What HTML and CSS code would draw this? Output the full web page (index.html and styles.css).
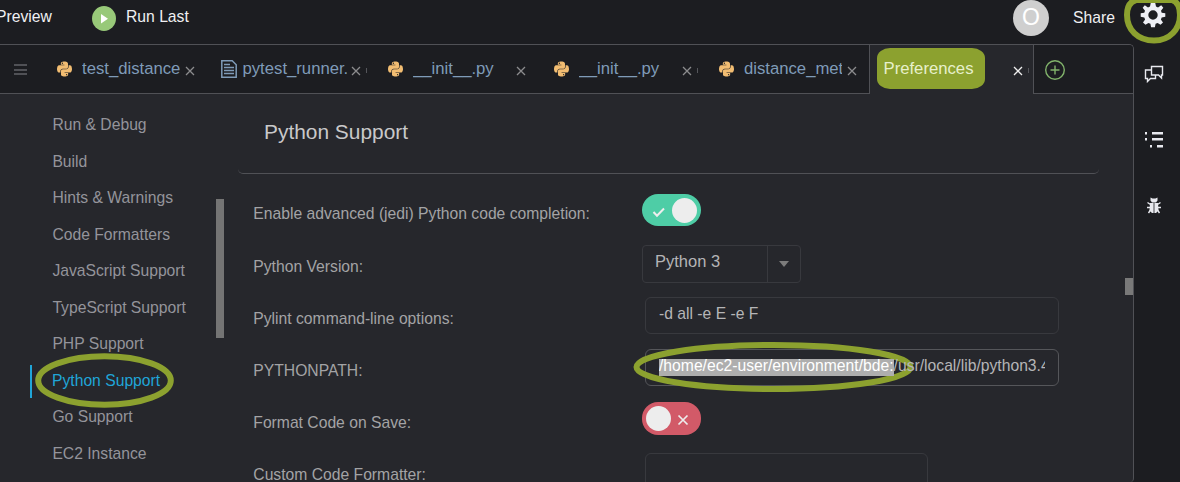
FILE: index.html
```html
<!DOCTYPE html>
<html lang="en">
<head>
<meta charset="utf-8">
<title>Preferences</title>
<link rel="stylesheet" href="styles.css">
</head>
<body>
<svg class="defs" width="0" height="0">
  <symbol id="python" viewBox="0 30 448 452"><path d="M439.8 200.5c-7.7-30.9-22.3-54.2-53.4-54.2h-40.1v47.4c0 36.8-31.2 67.8-66.8 67.8H172.7c-29.2 0-53.4 25-53.4 54.3v101.8c0 29 25.2 46 53.4 54.3 33.8 9.9 66.3 11.7 106.8 0 26.9-7.8 53.4-23.5 53.4-54.3v-40.7H226.2v-13.6h160.2c31.1 0 42.6-21.7 53.4-54.2 11.2-33.5 10.7-65.7 0-108.6zM286.2 404c11.1 0 20.1 9.1 20.1 20.3 0 11.3-9 20.4-20.1 20.4-11 0-20.1-9.2-20.1-20.4.1-11.3 9.1-20.3 20.1-20.3zM167.8 248.1h106.8c29.7 0 53.4-24.5 53.4-54.3V91.9c0-29-24.4-50.7-53.4-55.6-35.8-5.9-74.7-5.6-106.8.1-45.2 8-53.4 24.7-53.4 55.6v40.7h106.9v13.6h-147c-31.1 0-58.3 18.7-66.8 54.2-9.8 40.7-10.2 66.1 0 108.6 7.6 31.6 25.7 54.2 56.8 54.2H101v-48.8c0-35.3 30.5-66.4 66.8-66.4zm-6.7-142.6c-11.1 0-20.1-9.1-20.1-20.3.1-11.3 9-20.4 20.1-20.4 11 0 20.1 9.2 20.1 20.4s-9 20.3-20.1 20.3z"/></symbol>
  <symbol id="close" viewBox="0 0 10 10"><path d="M1 1l8 8M9 1l-8 8"/></symbol>
</svg>

<header class="topbar">
  <span class="preview">Preview</span>
  <span class="run-icon"><svg width="24" height="24" viewBox="0 0 24 24"><path d="M9 8l7 4.7-7 4.7z" fill="#fff"/></svg></span>
  <span class="run-label">Run Last</span>
  <span class="avatar">O</span>
  <span class="share">Share</span>
  <svg class="gear" width="26" height="26" viewBox="-13 -13 26 26"><path fill="#eeeff5" fill-rule="evenodd" d="M-2.2-12.3H2.2L3-8.5 5-7.6 8.2-9.7 10.3-7.2 8-4.2 8.7-2.2 12.3-1.7V1.7L8.7 2.4 7.9 4.6 10 7.6 7.5 9.8 4.6 7.9 2.6 8.8 1.9 12.3H-1.9L-2.6 8.8-4.6 7.9-7.5 9.8-10 7.6-7.9 4.6-8.7 2.4-12.3 1.7V-1.7L-8.7-2.2-8-4.2-10.3-7.2-8.2-9.7-5-7.6-3-8.5zM0-4.7A4.7 4.7 0 1 0 0 4.7 4.7 4.7 0 1 0 0-4.7z"/></svg>
</header>

<div class="workspace">
  <main class="panel">
    <nav class="tabs">
      <div class="tab-menu"><i></i><i></i><i></i></div>
      <div class="tab"><svg class="py"><use href="#python"/></svg><span class="tab-name">test_distance</span><svg class="x"><use href="#close"/></svg></div>
      <div class="tab doc"><svg class="file" viewBox="0 0 16 18"><path d="M.8.8h10.4l4 4v12.4H.8zM3 4.500h6M3 7.500h10M3 10.500h10M3 13.500h10"/></svg><span class="tab-name">pytest_runner.</span><svg class="x"><use href="#close"/></svg><i class="edge"></i></div>
      <div class="tab"><svg class="py"><use href="#python"/></svg><span class="tab-name">__init__.py</span><svg class="x"><use href="#close"/></svg></div>
      <div class="tab"><svg class="py"><use href="#python"/></svg><span class="tab-name">__init__.py</span><svg class="x"><use href="#close"/></svg><i class="edge"></i></div>
      <div class="tab"><svg class="py"><use href="#python"/></svg><span class="tab-name">distance_met</span><svg class="x"><use href="#close"/></svg></div>
      <div class="tab active"><span class="mark">Preferences</span><svg class="x"><use href="#close"/></svg><i class="edge"></i></div>
      <div class="new-tab"><svg width="22" height="22" viewBox="0 0 22 22"><circle cx="11" cy="11" r="9.300"/><path d="M11 6.500v9M6.500 11h9"/></svg></div>
    </nav>
    <div class="content">
      <aside class="sidebar">
        <ul class="menu">
          <li>Run &amp; Debug</li>
          <li>Build</li>
          <li>Hints &amp; Warnings</li>
          <li>Code Formatters</li>
          <li>JavaScript Support</li>
          <li>TypeScript Support</li>
          <li>PHP Support</li>
          <li class="current">Python Support</li>
          <li>Go Support</li>
          <li>EC2 Instance</li>
        </ul>
        <div class="side-thumb"></div>
      </aside>
      <section class="form">
        <h1 class="title">Python Support</h1>
        <div class="row"><label>Enable advanced (jedi) Python code completion:</label>
          <span class="toggle on"><svg width="14" height="12" viewBox="0 0 14 12"><path d="M1.500 6l3.500 3.800L12 2.500"/></svg><b></b></span></div>
        <div class="row"><label>Python Version:</label>
          <span class="select"><span>Python 3</span><i><svg width="10" height="6" viewBox="0 0 10 6"><path d="M0 0h10L5 6z"/></svg></i></span></div>
        <div class="row"><label>Pylint command-line options:</label>
          <span class="input"><span class="value">-d all -e E -e F</span></span></div>
        <div class="row"><label>PYTHONPATH:</label>
          <span class="input focus"><span class="value"><mark>/home/ec2-user/environment/bde:</mark>/usr/local/lib/python3.4</span></span></div>
        <div class="row"><label>Format Code on Save:</label>
          <span class="toggle off"><b></b><svg width="12" height="12" viewBox="0 0 12 12"><path d="M1.500 1.500l9 9M10.500 1.500l-9 9"/></svg></span></div>
        <div class="row"><label>Custom Code Formatter:</label>
          <span class="input short"></span></div>
      </section>
      <div class="main-thumb"></div>
    </div>
  </main>
  <aside class="rail">
    <svg width="20" height="18" viewBox="0 0 20 18"><path class="line" d="M7.500 1.500h11v8.500h-1v3l-3-3h-7zM7.500 5H1.500v8.500h2v3l3-3h5V10"/></svg>
    <svg width="20" height="18" viewBox="0 0 20 18"><path d="M1 1h2v2.500H1zM8 1h11v2.500H8zM1 7h2v2.500H1zM8 7h11v2.500H8zM6 14h2v2.500H6zM13 14h6v2.500h-6z"/></svg>
    <svg width="14" height="17" viewBox="0 0 14 17"><path d="M3.500.5l2 1h3l2-1v3L9 5.500H5L3.500 3.500zM3 6h3.600v10H5L2.500 13.500zM7.400 6H11l.5 7.500L9 16H7.400z"/><path class="line" d="M3.500 7.500l-3-2M3.500 10.500H0M3.500 13l-2 3M10.500 7.500l3-2M10.500 10.500H14M10.500 13l2 3"/></svg>
  </aside>
</div>

<svg class="annotations" width="1180" height="482" viewBox="0 0 1180 482">
  <ellipse cx="104.500" cy="380.500" rx="66.300" ry="24.300"/>
  <ellipse cx="773.500" cy="367" rx="137" ry="22"/>
  <path d="M1136 0C1129 2 1127 8 1127 15C1127 30 1138 40.500 1154 40.500C1170 40.500 1180 29 1180 15C1180 7 1178 2 1172 0Z"/>
</svg>
</body>
</html>
```
FILE: styles.css
```css
* { box-sizing: border-box; }
body {
  margin: 0;
  width: 1180px;
  height: 482px;
  overflow: hidden;
  position: relative;
  background: #1c1d21;
  font: 16px/20px "Liberation Sans", Arial, sans-serif;
  color: #a3a3a5;
}
svg { display: block; flex: none; }
.defs { position: absolute; }

.topbar {
  display: flex;
  height: 44px;
  align-items: flex-start;
  color: #f0f0f2;
  white-space: nowrap;
}
.preview { width: 92px; margin-left: -4px; padding-top: 7px; font-size: 15.700px; }
.run-icon { width: 24px; height: 25px; margin: 6px 10px 0 4px; border-radius: 50%; background: #98c979; }
.run-label { padding-top: 7px; flex: 1; font-size: 15.700px; }
.avatar { width: 36px; height: 36px; border-radius: 50%; background: #cfcfcf; color: #fff; font-size: 23px; line-height: 34px; text-align: center; }
.share { width: 67px; margin-left: 24px; padding-top: 8px; font-size: 15.700px; }
.gear { margin: 2px 14px 0 0; }

.workspace { display: flex; height: 438px; }
.panel {
  width: 1134px;
  border: solid #505156;
  border-width: 1px 1px 0 0;
  border-radius: 0 5px 4px 0;
  background: #26272c;
  overflow: hidden;
}
.tabs { display: flex; height: 49px; background: #1c1d21; border-bottom: 1px solid #505156; }
.tab-menu { width: 41px; padding: 19px 0 0 14px; display: flex; flex-direction: column; gap: 2.500px; }
.tab-menu i { width: 13px; height: 2px; background: #505156; }
.tab { width: 165.500px; display: flex; padding-left: 16px; color: #7f9bb8; }
.py { width: 15px; height: 16px; margin: 16px 10px 0 0; fill: #f2bd72; }
.file { width: 16px; height: 18px; margin: 15px 6px 0 -2px; fill: none; stroke: #7f9bb8; stroke-width: 1.500px; }
.tab-name { width: 98px; height: 40px; padding-top: 14px; overflow: hidden; font-size: 16.700px; white-space: nowrap; }
.doc .tab-name { width: 104px; }
.x { width: 10px; height: 10px; margin: 21px 0 0 5px; fill: none; stroke: #8c8c8e; stroke-width: 1.300px; }
.doc .x { margin-left: 4px; }
.edge { width: 1px; height: 5px; margin: 23px 0 0 5px; background: #55565b; }
.active { height: 49px; padding-left: 7px; background: #26272c; border: solid #505156; border-width: 0 1px; }
.mark { width: 108px; height: 41px; margin-top: 3px; padding: 11px 0 0 7px; border-radius: 13px / 10px; background: #8ca12f; color: #e7f0cc; font-size: 16.700px; }
.active .x { margin-left: 28px; stroke: #eee; }
.new-tab { padding: 14px 0 0 10px; }
.new-tab svg { fill: none; stroke: #81b36b; stroke-width: 1.400px; }

.content { display: flex; height: 388px; }
.sidebar { width: 224px; display: flex; justify-content: space-between; }
.menu { list-style: none; margin: 0; padding: 12px 0 0 30px; width: 210px; color: #94949b; font-size: 15.700px; }
.menu li { height: 36.550px; line-height: 37px; padding-left: 22.400px; }
.menu .current { padding-left: 22px; color: #20a5d8; background: linear-gradient(#20a5d8, #20a5d8) 0 3px / 2px 34px no-repeat; }
.side-thumb { width: 8px; height: 139px; margin-top: 105px; background: #747474; }
.form { width: 875px; padding-left: 14px; }
.title { margin: 0 0 14px; height: 80px; padding: 24px 0 0 26px; border-bottom: 1px solid #505156; border-radius: 0 0 5px 5px; font-size: 20.900px; line-height: 28px; font-weight: 400; color: #c9c9ca; }
.row { display: grid; grid-template-columns: 389px 1fr; height: 52px; padding-left: 15px; align-items: start; }
.row label { padding: 17px 0 0 .3px; font-size: 15.700px; white-space: nowrap; }
.title + .row label { padding-top: 16px; }
.toggle { display: flex; align-items: center; width: 59px; height: 32px; margin-top: 6px; border-radius: 16px; }
.toggle b { width: 25px; height: 25px; border-radius: 50%; background: #ededed; }
.toggle svg { fill: none; stroke: #ededed; stroke-width: 2px; }
.on { background: #4ecda6; gap: 6px; padding-left: 10px; }
.on svg { margin-top: 3px; }
.off { background: #d25a68; height: 33px; gap: 6px; padding-left: 4px; }
.off svg { margin-top: 3px; stroke-width: 1.700px; }
.select { display: flex; width: 159px; height: 38px; margin-top: 5px; border: 1px solid #38393e; border-radius: 4px; font-size: 16.500px; color: #b4b4b6; }
.select span { width: 125px; padding: 5px 0 0 12px; border-right: 1px solid #38393e; }
.select i { padding: 15px 0 0 11px; fill: #7c7c7c; }
.input { display: block; width: 414px; height: 37px; margin: 5px 0 0 3px; padding: 6px 13px; border: 1px solid #38393e; border-radius: 6px; color: #b5b5b7; }
.focus { border-color: #55565a; }
.short { width: 283px; }
.value { display: block; overflow: hidden; white-space: nowrap; position: relative; z-index: 2; font-size: 15.700px; }
mark { color: #fff; background: linear-gradient(#aeaeae, #aeaeae) 0 2px / 100% 100% no-repeat; padding-bottom: 2px; }
.main-thumb { width: 8px; height: 17px; margin: 184px 0 0 26px; background: #797979; }

.rail { width: 46px; padding: 21px 0 0 10px; display: flex; flex-direction: column; gap: 48px; fill: #e8e9ef; }
.rail svg:last-child { margin-left: 3px; }
.line { fill: none; stroke: #e8e9ef; stroke-width: 1.400px; }
.annotations { position: absolute; left: 0; top: 0; z-index: 1; fill: none; stroke: #8ca12f; stroke-width: 6px; }
```
